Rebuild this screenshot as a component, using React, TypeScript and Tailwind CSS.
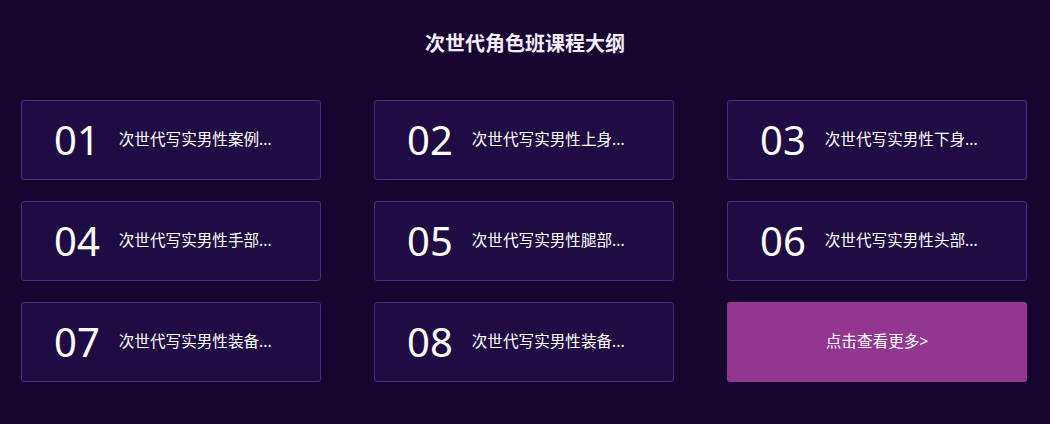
const items = [
  { no: "01", title: "次世代写实男性案例..." },
  { no: "02", title: "次世代写实男性上身..." },
  { no: "03", title: "次世代写实男性下身..." },
  { no: "04", title: "次世代写实男性手部..." },
  { no: "05", title: "次世代写实男性腿部..." },
  { no: "06", title: "次世代写实男性头部..." },
  { no: "07", title: "次世代写实男性装备..." },
  { no: "08", title: "次世代写实男性装备..." },
];

export default function App() {
  return (
    <div
      className="min-h-[424px] w-full bg-[#17052f] pt-[30px] pb-[42px]"
      style={{ fontFamily: '"Noto Sans", "Noto Sans CJK SC", sans-serif' }}
    >
      <h2 className="m-0 text-center text-[20px] leading-[28px] font-bold text-[#f3ecff]">
        次世代角色班课程大纲
      </h2>
      <div className="mt-[42px] ml-[21px] grid w-[1006px] grid-cols-3 gap-x-[53px] gap-y-[21px]">
        {items.map((it) => (
          <div
            key={it.no}
            className="flex h-[80px] items-center rounded-[3px] border border-[#4a2b8a] bg-[#200c45] pl-[32px]"
          >
            <span className="text-[40px] leading-none text-white">{it.no}</span>
            <span className="ml-[19px] text-[15.6px] text-white">{it.title}</span>
          </div>
        ))}
        <button className="flex h-[80px] items-center justify-center rounded-[3px] bg-[#933692] text-[15.6px] text-white">
          点击查看更多&gt;
        </button>
      </div>
    </div>
  );
}
